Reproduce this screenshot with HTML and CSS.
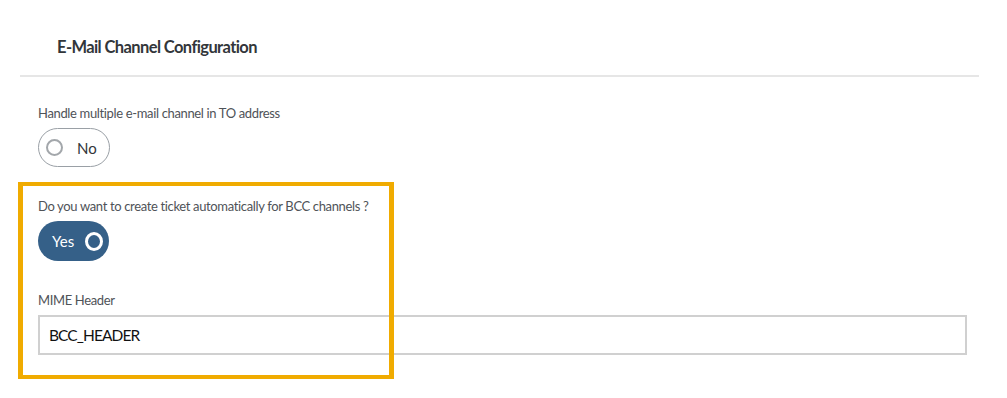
FILE: index.html
```html
<!DOCTYPE html>
<html lang="en">
<head>
    <meta charset="UTF-8">
    <meta name="viewport" content="width=device-width, initial-scale=1.0">
    <title>E-Mail Channel Configuration</title>
    <link rel="stylesheet" href="styles.css">
</head>
<body>

<div class="page">
    <div class="header">
        <h2>E-Mail Channel Configuration</h2>
    </div>

    <div class="form">
        <div class="form-group">
            <label>Handle multiple e-mail channel in TO address</label>
            <div class="switch switch-off">
                <span class="knob"></span>
                <span class="switch-text">No</span>
            </div>
        </div>
        <div class="form-group">
            <label>Do you want to create ticket automatically for BCC channels ?</label>
            <div class="switch switch-on">
                <span class="switch-text">Yes</span>
                <span class="knob"></span>
            </div>
        </div>
        <div class="form-group">
            <label for="mime">MIME Header</label>
            <input type="text" id="mime" value="BCC_HEADER">
        </div>
    </div>

    <!-- highlight frame drawn over the BCC settings -->
    <div class="highlight"></div>
</div>

</body>
</html>
```

FILE: styles.css
```css
body {
    margin: 0;
    font-family: Lato, "Liberation Sans", Arial, sans-serif;
    background-color: #ffffff;
    color: #32363a;
}
.page {
    position: relative;
    height: 398px;
    padding: 0 28px 0 20px;
}
.header {
    padding: 36px 0 17px 37px;
    border-bottom: 2px solid #e6e6e6;
}
.header h2 {
    margin: 0;
    font-size: 16.5px;
    line-height: 22px;
    font-weight: bold;
    letter-spacing: -0.6px;
    color: #32363a;
}
.form {
    padding: 28px 12px 0 18px;
}
.form-group {
    margin-bottom: 31px;
}
label {
    display: block;
    font-size: 13px;
    line-height: 16px;
    letter-spacing: -0.35px;
    color: #4f5358;
    margin-bottom: 7px;
}
.switch {
    display: flex;
    align-items: center;
    box-sizing: border-box;
    width: 72px;
    height: 39px;
    border-radius: 20px;
    font-size: 15px;
}
.switch-off {
    border: 1px solid #9aa0a6;
    background-color: #fff;
    padding-left: 7px;
    gap: 14px;
}
.switch-off .knob {
    width: 13px;
    height: 13px;
    border: 2px solid #a3a7ab;
    border-radius: 50%;
}
.switch-on {
    background-color: #356088;
    color: #fff;
    height: 40px;
    width: 71px;
    padding-left: 14px;
    gap: 11px;
}
.switch-on .knob {
    width: 12px;
    height: 13px;
    border: 3px solid #fff;
    border-radius: 50%;
}
input[type="text"] {
    display: block;
    box-sizing: border-box;
    width: 100%;
    height: 40px;
    padding: 0 9px;
    border: 2px solid #d0d0d0;
    font-family: Lato, "Liberation Sans", Arial, sans-serif;
    font-size: 15.5px;
    letter-spacing: -0.9px;
    color: #111;
    outline: none;
}
.highlight {
    position: absolute;
    left: 18px;
    top: 182px;
    width: 366px;
    height: 189px;
    border: 5px solid #f0ab00;
    border-width: 4px 5px;
}
```
